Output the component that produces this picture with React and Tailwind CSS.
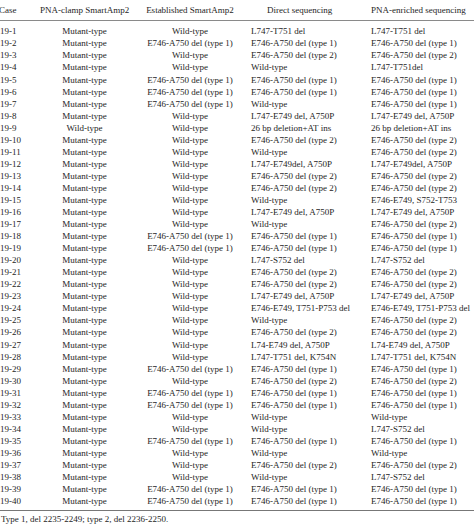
import React from "react";

const M = "Mutant-type";
const W = "Wild-type";
const T1 = "E746-A750 del (type 1)";
const T2 = "E746-A750 del (type 2)";
const LE = "L747-E749 del, A750P";

const rows = [
  ["19-1", M, W, "L747-T751 del", "L747-T751 del"],
  ["19-2", M, T1, T1, T1],
  ["19-3", M, W, T2, T2],
  ["19-4", M, W, W, "L747-T751del"],
  ["19-5", M, T1, T1, T1],
  ["19-6", M, T1, T1, T1],
  ["19-7", M, T1, W, T1],
  ["19-8", M, W, LE, LE],
  ["19-9", W, W, "26 bp deletion+AT ins", "26 bp deletion+AT ins"],
  ["19-10", M, W, T2, T2],
  ["19-11", M, W, W, T2],
  ["19-12", M, W, "L747-E749del, A750P", "L747-E749del, A750P"],
  ["19-13", M, W, T2, T2],
  ["19-14", M, W, T2, T2],
  ["19-15", M, W, W, "E746-E749, S752-T753"],
  ["19-16", M, W, LE, LE],
  ["19-17", M, W, W, T2],
  ["19-18", M, T1, T1, T1],
  ["19-19", M, T1, T1, T1],
  ["19-20", M, W, "L747-S752 del", "L747-S752 del"],
  ["19-21", M, W, T2, T2],
  ["19-22", M, W, T2, T2],
  ["19-23", M, W, LE, LE],
  ["19-24", M, W, "E746-E749, T751-P753 del", "E746-E749, T751-P753 del"],
  ["19-25", M, W, W, T2],
  ["19-26", M, W, T2, T2],
  ["19-27", M, W, "L74-E749 del, A750P", "L74-E749 del, A750P"],
  ["19-28", M, W, "L747-T751 del, K754N", "L747-T751 del, K754N"],
  ["19-29", M, T1, T1, T1],
  ["19-30", M, W, T2, T2],
  ["19-31", M, T1, T1, T1],
  ["19-32", M, T1, T1, T1],
  ["19-33", M, W, W, W],
  ["19-34", M, W, W, "L747-S752 del"],
  ["19-35", M, T1, T1, T1],
  ["19-36", M, W, W, W],
  ["19-37", M, W, T2, T2],
  ["19-38", M, W, W, "L747-S752 del"],
  ["19-39", M, T1, T1, T1],
  ["19-40", M, T1, T1, T1],
];

const grid = "grid grid-cols-[40px_89px_122px_120px_1fr] items-center";

export default function App() {
  return (
    <div
      className="w-[474px] h-[529px] bg-white text-[#252525] text-[9px] overflow-hidden"
      style={{ fontFamily: '"Liberation Serif", "Times New Roman", serif' }}
    >
      <div className={`${grid} h-[21px] pt-[4px] pb-[5px] leading-[12px] border-b border-[#8a8a8a]`}>
        <div className="whitespace-nowrap ml-[-1px]">Case</div>
        <div className="text-center whitespace-nowrap">PNA-clamp SmartAmp2</div>
        <div className="text-center whitespace-nowrap">Established SmartAmp2</div>
        <div className="pl-[16px] whitespace-nowrap">Direct sequencing</div>
        <div className="whitespace-nowrap">PNA-enriched sequencing</div>
      </div>
      <div className="pt-[4.3px] pb-[3px] border-b-[1.5px] border-[#777]">
        {rows.map((r) => (
          <div key={r[0]} className={`${grid} h-[12.05px] leading-[12px]`}>
            <div className="whitespace-nowrap">{r[0]}</div>
            <div className="text-center whitespace-nowrap">{r[1]}</div>
            <div className="text-center whitespace-nowrap">{r[2]}</div>
            <div className="whitespace-nowrap">{r[3]}</div>
            <div className="whitespace-nowrap">{r[4]}</div>
          </div>
        ))}
      </div>
      <div className="pt-[2px] pl-[1px] leading-[12px] whitespace-nowrap">
        Type 1, del 2235-2249; type 2, del 2236-2250.
      </div>
    </div>
  );
}
